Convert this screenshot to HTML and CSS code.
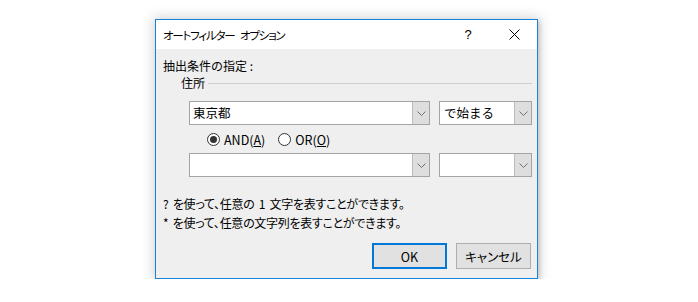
FILE: index.html
```html
<!DOCTYPE html>
<html lang="ja">
<head>
<meta charset="utf-8">
<title>オートフィルター オプション</title>
<link rel="stylesheet" href="styles.css">
</head>
<body>
<div class="dialog">
  <div class="titlebar">
    <span class="title">オートフィルター オプション</span>
    <span class="tb-btn help">?</span>
    <span class="tb-btn close">
      <svg width="11" height="11" viewBox="0 0 11 11"><path d="M0.5 0.5 L10.5 10.5 M10.5 0.5 L0.5 10.5" stroke="#000" stroke-width="1" fill="none"/></svg>
    </span>
  </div>
  <div class="content">
    <div class="criteria-label">抽出条件の指定 :</div>
    <div class="group-row"><span class="group-name">住所</span><span class="groove"></span></div>
    <div class="combo-row">
      <div class="combo value"><span class="combo-text">東京都</span><span class="drop"><svg width="9" height="5" viewBox="0 0 9 5"><path d="M0.5 0.5 L4.5 4.5 L8.5 0.5" stroke="#707070" fill="none"/></svg></span></div>
      <div class="combo op"><span class="combo-text">で始まる</span><span class="drop"><svg width="9" height="5" viewBox="0 0 9 5"><path d="M0.5 0.5 L4.5 4.5 L8.5 0.5" stroke="#707070" fill="none"/></svg></span></div>
    </div>
    <div class="radio-row">
      <label class="radio"><span class="circle checked"></span><span>AND(<u>A</u>)</span></label>
      <label class="radio"><span class="circle"></span><span>OR(<u>O</u>)</span></label>
    </div>
    <div class="combo-row second">
      <div class="combo value"><span class="combo-text"></span><span class="drop"><svg width="9" height="5" viewBox="0 0 9 5"><path d="M0.5 0.5 L4.5 4.5 L8.5 0.5" stroke="#707070" fill="none"/></svg></span></div>
      <div class="combo op"><span class="combo-text"></span><span class="drop"><svg width="9" height="5" viewBox="0 0 9 5"><path d="M0.5 0.5 L4.5 4.5 L8.5 0.5" stroke="#707070" fill="none"/></svg></span></div>
    </div>
    <div class="hints">
      <div class="hint">? を使って、任意の 1 文字を表すことができます。</div>
      <div class="hint">* を使って、任意の文字列を表すことができます。</div>
    </div>
    <div class="buttons">
      <button class="btn default">OK</button>
      <button class="btn">キャンセル</button>
    </div>
  </div>
</div>
</body>
</html>
```
FILE: styles.css
```css
html, body {
  margin: 0;
  background: #ffffff;
}
body {
  padding: 19px 0 0 155px;
  font-family: "Noto Sans CJK JP", "Noto Sans", sans-serif;
  font-size: 12px;
  color: #000;
}
.dialog {
  box-sizing: border-box;
  width: 383px;
  height: 260px;
  border: 1px solid #1883d7;
  background: #efefef;
  box-shadow: 0 0 12px 2px rgba(0, 0, 0, 0.16), 2px 2px 4px rgba(0, 0, 0, 0.14);
  display: flex;
  flex-direction: column;
}
.titlebar {
  height: 29px;
  background: #ffffff;
  display: flex;
  align-items: center;
  padding-left: 7px;
}
.title {
  flex: 1;
  font-feature-settings: "palt";
  letter-spacing: -1.2px;
  word-spacing: 4px;
  font-size: 11.5px;
  line-height: 16px;
}
.tb-btn {
  width: 46px;
  height: 29px;
  display: flex;
  align-items: center;
  justify-content: center;
}
.help {
  font-size: 13px;
  font-family: "Liberation Sans", sans-serif;
}
.content {
  padding: 0 5px 0 7px;
  display: flex;
  flex-direction: column;
}
.criteria-label {
  margin-top: 8px;
  height: 17px;
  line-height: 17px;
}
.group-row {
  height: 18px;
  display: flex;
  align-items: center;
  padding-left: 18px;
}
.group-name {
  line-height: 16px;
}
.groove {
  flex: 1;
  height: 1px;
  background: #cfcfcf;
  margin-left: 3px;
  margin-top: 1px;
}
.combo-row {
  margin-top: 9px;
  height: 24px;
  display: flex;
  gap: 9px;
  padding-left: 26px;
}
.combo-row.second {
  margin-top: 0;
}
.combo {
  box-sizing: border-box;
  height: 24px;
  border: 1px solid #a4a4a4;
  background: #ffffff;
  display: flex;
  align-items: stretch;
}
.combo.value { width: 241px; }
.combo.op { width: 93px; }
.combo-text {
  flex: 1;
  padding-left: 3px;
  line-height: 22px;
  font-size: 12.5px;
}
.combo.op .combo-text { padding-left: 4px; }
.drop {
  width: 17px;
  box-sizing: border-box;
  background: #dedede;
  border-left: 1px solid #bcbcbc;
  display: flex;
  align-items: center;
  justify-content: center;
}
.radio-row {
  height: 28px;
  display: flex;
  align-items: center;
  padding-left: 44px;
  gap: 13px;
}
.radio {
  display: flex;
  align-items: center;
  gap: 4px;
  font-size: 12.5px;
}
.circle {
  box-sizing: border-box;
  width: 13px;
  height: 13px;
  border-radius: 50%;
  border: 1px solid #333;
  background: #fff;
  display: flex;
  align-items: center;
  justify-content: center;
}
.circle.checked::after {
  content: "";
  width: 7px;
  height: 7px;
  border-radius: 50%;
  background: #333;
}
.hints {
  margin-top: 17px;
}
.hint {
  height: 19px;
  line-height: 19px;
  font-feature-settings: "palt";
  letter-spacing: -0.3px;
  word-spacing: 2px;
}
.buttons {
  margin-top: 11px;
  display: flex;
  justify-content: flex-end;
  gap: 9px;
  padding-right: 1px;
}
.btn {
  box-sizing: border-box;
  width: 75px;
  height: 26px;
  border: 1px solid #adadad;
  background: #e1e1e1;
  font-family: "Noto Sans CJK JP", "Noto Sans", sans-serif;
  font-size: 12.5px;
  font-feature-settings: "palt";
  color: #000;
  padding: 0;
}
.btn.default {
  border: 2px solid #0078d7;
}
```
